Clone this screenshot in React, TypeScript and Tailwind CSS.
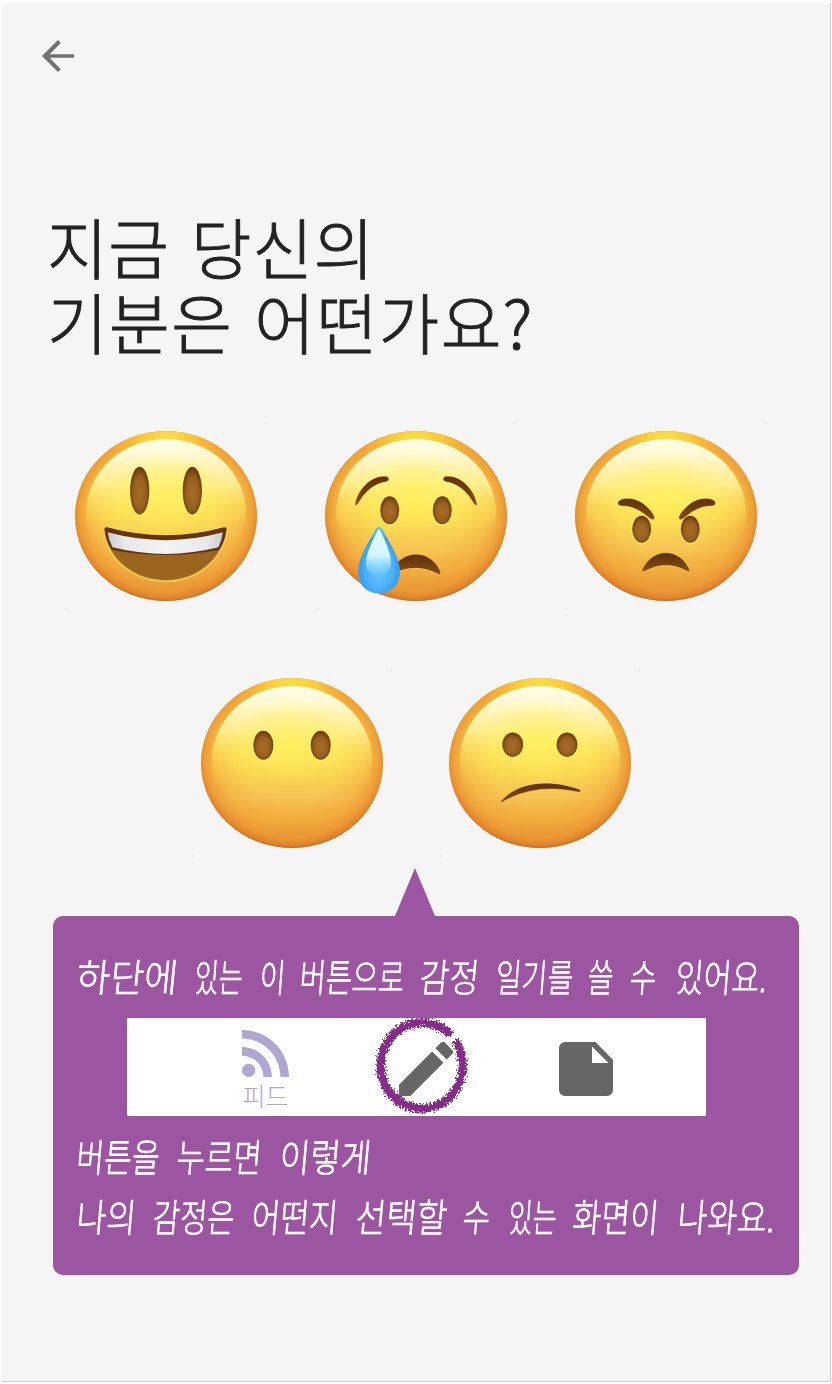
import React from "react";

const Brow = ({ d }: { d: string }) => <path d={d} fill="url(#feature)" stroke="#ffe96a" strokeOpacity=".35" strokeWidth="1" />;

function Eyes({ x1, x2, y, rx, ry }: { x1: number; x2: number; y: number; rx: number; ry: number }) {
  return (
    <g>
      {[x1, x2].map((x) => (
        <g key={x}>
          <ellipse cx={x} cy={y + 0.8} rx={rx + 0.9} ry={ry + 0.9} fill="#fff45e" opacity=".6" />
          <ellipse cx={x} cy={y} rx={rx} ry={ry} fill="url(#eye)" />
        </g>
      ))}
    </g>
  );
}

function Face({ label, children }: { label: string; children: React.ReactNode }) {
  return (
    <button aria-label={label} className="block h-[190px] w-[200px]">
      <svg viewBox="0 0 200 190" width="200" height="190">
        <ellipse cx="100" cy="95" rx="91" ry="85" fill="url(#base)" />
        <ellipse cx="100" cy="95" rx="91" ry="85" fill="url(#rim)" />
        <ellipse cx="100" cy="95" rx="91" ry="85" fill="url(#topglow)" />
        <ellipse cx="100" cy="92" rx="80" ry="74" fill="url(#shine)" />
        <ellipse cx="100" cy="76" rx="62" ry="44" fill="url(#center)" />
        {children}
        <circle cx="199" cy="2" r=".7" fill="#f3c9cf" />
        <circle cx="1" cy="188" r=".7" fill="#f3c9cf" />
      </svg>
    </button>
  );
}

function Defs() {
  return (
    <svg width="0" height="0" className="absolute" aria-hidden="true">
      <defs>
        <linearGradient id="base" x1="0" y1="0" x2="0" y2="1">
          <stop offset="0" stopColor="#f9b02e" />
          <stop offset=".3" stopColor="#fbd94f" />
          <stop offset=".5" stopColor="#fadb52" />
          <stop offset=".7" stopColor="#f6c552" />
          <stop offset=".82" stopColor="#f3b03e" />
          <stop offset="1" stopColor="#cf8430" />
        </linearGradient>
        <radialGradient id="rim" cx=".5" cy=".47" r=".54">
          <stop offset=".5" stopColor="#f2a93e" stopOpacity="0" />
          <stop offset=".74" stopColor="#f2a63c" stopOpacity=".5" />
          <stop offset=".88" stopColor="#ec9734" stopOpacity=".85" />
          <stop offset=".95" stopColor="#e0832d" />
          <stop offset="1" stopColor="#b8601f" />
        </radialGradient>
        <radialGradient id="topglow" cx=".5" cy=".05" r=".36">
          <stop offset="0" stopColor="#ffdf42" />
          <stop offset=".4" stopColor="#fdd03a" stopOpacity=".8" />
          <stop offset="1" stopColor="#f9a63a" stopOpacity="0" />
        </radialGradient>
        <linearGradient id="shine" x1="0" y1="0" x2="0" y2="1">
          <stop offset="0" stopColor="#fffeec" />
          <stop offset=".12" stopColor="#fffcd6" stopOpacity=".95" />
          <stop offset=".3" stopColor="#fff8a0" stopOpacity=".8" />
          <stop offset=".44" stopColor="#fff06c" stopOpacity=".5" />
          <stop offset=".6" stopColor="#fde05a" stopOpacity=".12" />
          <stop offset=".7" stopColor="#fbd850" stopOpacity="0" />
        </linearGradient>
        <radialGradient id="center" cx=".5" cy=".5" r=".5">
          <stop offset="0" stopColor="#fff35e" stopOpacity=".8" />
          <stop offset=".5" stopColor="#ffef5c" stopOpacity=".4" />
          <stop offset="1" stopColor="#fee75a" stopOpacity="0" />
        </radialGradient>
        <radialGradient id="eye" cx=".5" cy=".55" r=".55">
          <stop offset="0" stopColor="#a46d26" />
          <stop offset=".6" stopColor="#986020" />
          <stop offset="1" stopColor="#65370d" />
        </radialGradient>
        <linearGradient id="feature" x1="0" y1="0" x2="0" y2="1">
          <stop offset="0" stopColor="#5f300b" />
          <stop offset="1" stopColor="#844c17" />
        </linearGradient>
        <linearGradient id="teeth" x1="0" y1="0" x2="1" y2="0">
          <stop offset="0" stopColor="#c9ccd2" />
          <stop offset=".15" stopColor="#e9e9ec" />
          <stop offset=".5" stopColor="#f3f3f3" />
          <stop offset=".85" stopColor="#e9e9ec" />
          <stop offset="1" stopColor="#c9ccd2" />
        </linearGradient>
        <radialGradient id="tear" cx=".5" cy=".62" r=".55">
          <stop offset="0" stopColor="#6fc9ff" />
          <stop offset=".55" stopColor="#4eb3fb" />
          <stop offset=".85" stopColor="#3c9ae9" />
          <stop offset="1" stopColor="#52c2e8" />
        </radialGradient>
        <linearGradient id="tearshine" x1="0" y1="0" x2="0" y2="1">
          <stop offset="0" stopColor="#e4fbff" />
          <stop offset=".6" stopColor="#d2f6ff" />
          <stop offset="1" stopColor="#8edcff" stopOpacity=".2" />
        </linearGradient>
        <filter id="crayon" x="-10%" y="-10%" width="120%" height="120%">
          <feTurbulence type="fractalNoise" baseFrequency=".5" numOctaves="2" seed="4" result="n" />
          <feDisplacementMap in="SourceGraphic" in2="n" scale="9" xChannelSelector="R" yChannelSelector="G" />
        </filter>
      </defs>
    </svg>
  );
}

type Word = { t: string; w: string; s: string };

const line1: Word[] = [
  { t: "하단에", w: "w-[118px]", s: "scale-x-[.94]" },
  { t: "있는", w: "w-[65px]", s: "scale-x-[.67]" },
  { t: "이", w: "w-[40px]", s: "scale-x-[.72]" },
  { t: "버튼으로", w: "w-[120px]", s: "scale-x-[.73]" },
  { t: "감정", w: "w-[76px]", s: "scale-x-[.83]" },
  { t: "일기를", w: "w-[92px]", s: "scale-x-[.72]" },
  { t: "쓸", w: "w-[42px]", s: "scale-x-[.72]" },
  { t: "수", w: "w-[46px]", s: "scale-x-[.74]" },
  { t: "있어요.", w: "w-[90px]", s: "scale-x-[.78]" },
];
const line2: Word[] = [
  { t: "버튼을", w: "w-[100px]", s: "scale-x-[.77]" },
  { t: "누르면", w: "w-[103px]", s: "scale-x-[.79]" },
  { t: "이렇게", w: "w-[95px]", s: "scale-x-[.85]" },
];
const line3: Word[] = [
  { t: "나의", w: "w-[76px]", s: "scale-x-[.83]" },
  { t: "감정은", w: "w-[99px]", s: "scale-x-[.76]" },
  { t: "어떤지", w: "w-[104px]", s: "scale-x-[.80]" },
  { t: "선택할", w: "w-[107px]", s: "scale-x-[.85]" },
  { t: "수", w: "w-[46px]", s: "scale-x-[.76]" },
  { t: "있는", w: "w-[64px]", s: "scale-x-[.67]" },
  { t: "화면이", w: "w-[105px]", s: "scale-x-[.80]" },
  { t: "나와요.", w: "w-[96px]", s: "scale-x-[.83]" },
];

function Line({ words }: { words: Word[] }) {
  return (
    <p className="flex h-[60px] items-center whitespace-nowrap text-[39px] leading-[60px] font-light text-white [-webkit-text-stroke:0.7px_white]">
      {words.map((word, i) => (
        <span key={i} className={`block shrink-0 ${word.w}`}>
          <span className={`inline-block origin-left ${word.s}`}>
            <span className="inline-block -skew-x-6">{word.t}</span>
          </span>
        </span>
      ))}
    </p>
  );
}

export default function App() {
  return (
    <div className="h-[1384px] w-[832px] bg-white pt-[3px] pl-[2px] font-['Noto_Sans_CJK_KR','Noto_Sans',sans-serif]">
      <Defs />
      <main className="flex h-[1379px] w-[829px] flex-col border-r border-b border-[#cfcfcf] bg-[#f5f5f5]">
        <header className="h-[205px] pt-[28.5px] pl-[32px]">
          <button aria-label="뒤로" className="block">
            <svg width="48" height="48" viewBox="0 0 24 24" fill="#717171">
              <path d="M20 11.100H7.830l5.590-5.590L12 4l-8 8 8 8 1.410-1.410L7.830 12.900H20v-1.800z" />
            </svg>
          </button>
        </header>

        <h1 className="flex h-[213px] flex-col pl-[45px] text-[66px] leading-[75px] font-light whitespace-nowrap text-[#222] [-webkit-text-stroke:0.9px_#222]">
          <span className="block tracking-[0.6px] [word-spacing:6px]">지금 당신의</span>
          <span className="block tracking-[1.4px] [word-spacing:5px]">기분은 어떤가요?</span>
        </h1>

        <section className="flex flex-col">
          <div className="flex gap-[50px] pl-[64px]">
            <Face label="기쁨">
              <Eyes x1={73.7} x2={126.3} y={69.7} rx={9.6} ry={24} />
              <path d="M38.5 109Q38 105.5 42 106.5Q100 122 157 106.5Q161 105.5 160.5 109C157 140 130 160 100 160C69 160 41 140 38.5 109Z" fill="#9b6520" stroke="#ffe85e" strokeOpacity=".6" strokeWidth="2" />
              <path d="M38.5 109Q38 105.5 42 106.5Q100 122 157 106.5Q161 105.5 160.5 109C159 119 156 125 153 129Q100 139 46 129C41 122 39.500 116 38.500 109Z" fill="#65340c" />
              <path d="M41.700 111.300Q100 127 156.800 111.300Q156 119 152.500 126.300Q100 139.500 46.500 126.300Q42.500 119 41.700 111.300Z" fill="url(#teeth)" />
            </Face>
            <Face label="슬픔">
              <Brow d="M39 83.500C42 66 58 53 71 55.500Q75 58 71 60.500C58 63 50 69 42.500 82Q39.500 86 39 83.500Z" />
              <Brow d="M161 83.500C158 66 142 53 129 55.500Q125 58 129 60.500C142 63 150 69 157.500 82Q160.500 86 161 83.500Z" />
              <Eyes x1={73.7} x2={126.3} y={89.3} rx={9.5} ry={14} />
              <Brow d="M74 153C84 127 115 127 124.700 151Q125 155 121 152.500Q100 142 78 152Z" />
              <path d="M63 106.300C66 106.300 67 109 69 113C76 126 84 138 84 151C84 164 75 172.300 63 172.300C51 172.300 42 164 42 151C42 138 50 126 57 113C59 109 60 106.300 63 106.300Z" fill="url(#tear)" />
              <path d="M63 107.500C68 116 75 132 75 142C75 151 69 153 63 153C56 153 50 151 50 142C50 132 58 116 63 107.500Z" fill="url(#tearshine)" />
            </Face>
            <Face label="화남">
              <Brow d="M52 82.500C50.500 77 68 74 79 84Q88 92 88.700 97Q87.500 100 84 97.500C73 88 64 84.500 56 85Q52.500 85 52 82.500Z" />
              <Brow d="M149.400 82.500C150.900 77 133.400 74 122.400 84Q113.400 92 112.700 97Q113.900 100 117.400 97.500C128.400 88 137.400 84.500 145.400 85Q148.900 85 149.400 82.500Z" />
              <Eyes x1={75.7} x2={124.3} y={108.3} rx={9.5} ry={13.5} />
              <Brow d="M76 149C86 126 114 126 123.700 149Q124 151.500 121 150Q100 138.500 79 150Q76 151.500 76 149Z" />
            </Face>
          </div>
          <div className="mt-[57px] flex gap-[48px] pl-[190px]">
            <Face label="무표정">
              <Eyes x1={71.3} x2={128.7} y={77.3} rx={10} ry={14.5} />
            </Face>
            <Face label="당황">
              <Eyes x1={72.7} x2={127} y={76.7} rx={10.4} ry={12.2} />
              <Brow d="M60.700 133.500C75 116 105 109 140 121.500Q142 124.500 138 124C110 118 85 121 63 133.700Q60.500 135 60.700 133.500Z" />
            </Face>
          </div>
        </section>

        <section className="mt-[10px] pl-[51px]">
          <svg className="ml-[342px] block" width="40" height="48" viewBox="0 0 40 48">
            <path d="M20 0L40 48H0Z" fill="#9c56a1" />
          </svg>
          <div className="h-[359px] w-[746px] rounded-[10px] bg-[#9c56a1] pt-[29px] pl-[24px]">
            <Line words={line1} />
            <div className="mt-[13px] ml-[50px] flex h-[98px] w-[579px] bg-white">
              <div className="flex w-[47px] shrink-0 flex-col items-center pt-[12px] ml-[115px]">
                <svg width="47" height="47" viewBox="4 4.440 15.560 15.560" fill="#b0a6d2">
                  <circle cx="6.180" cy="17.820" r="2.180" />
                  <path d="M4 4.440v2.830c7.030 0 12.730 5.700 12.730 12.730h2.830c0-8.590-6.970-15.560-15.560-15.560zm0 5.660v2.830c3.900 0 7.070 3.170 7.070 7.070h2.830c0-5.470-4.430-9.900-9.900-9.900z" />
                </svg>
                <span className="mt-[4px] text-[25px] leading-[28px] font-light text-[#b0a6d2]">피드</span>
              </div>
              <svg className="ml-[85px] block shrink-0" width="98" height="98" viewBox="0 0 98 98">
                <g transform="translate(16 15) scale(3)" fill="#666">
                  <path d="M3 17.250V21h3.750L17.810 9.940l-3.750-3.750L3 17.250zM20.710 7.040a.996.996 0 0 0 0-1.410l-2.340-2.340a.996.996 0 0 0-1.410 0l-1.830 1.830 3.750 3.750 1.830-1.830z" />
                </g>
                <path d="M79.500 22.500A41 43 0 1 1 75.500 17.500" fill="none" stroke="#862b8c" strokeWidth="8.500" filter="url(#crayon)" transform="translate(1.500 0)" />
              </svg>
              <svg className="mt-[24px] ml-[87px] block shrink-0" width="54" height="54" viewBox="0 0 54 54">
                <path fillRule="evenodd" d="M6 0H36.500L54 18V48A6 6 0 0 1 48 54H6A6 6 0 0 1 0 48V6A6 6 0 0 1 6 0ZM33 4.500V21H49.500Z" fill="#666" />
              </svg>
            </div>
            <div className="mt-[9px]">
              <Line words={line2} />
              <Line words={line3} />
            </div>
          </div>
        </section>
      </main>
    </div>
  );
}
